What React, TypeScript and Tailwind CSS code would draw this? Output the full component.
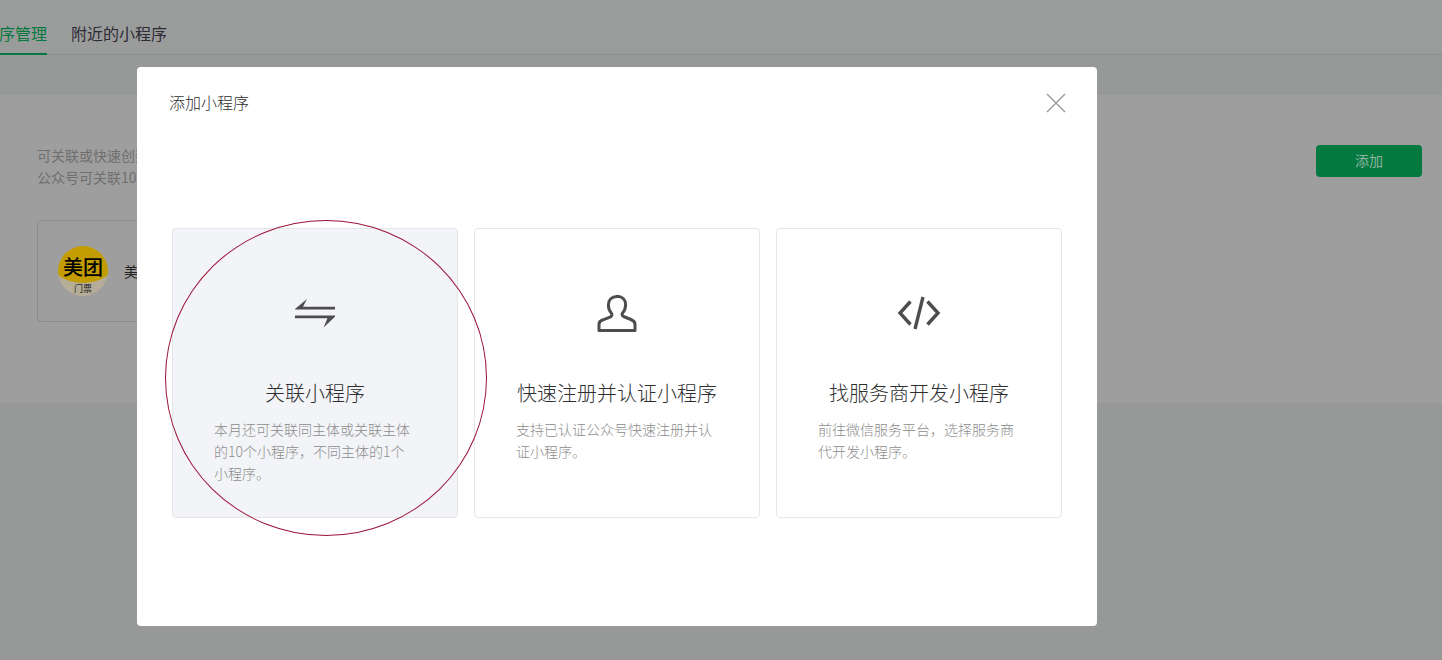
const cards = [
  {
    title: '关联小程序',
    desc: '本月还可关联同主体或关联主体的10个小程序，不同主体的1个小程序。',
    active: true,
    icon: (
      <svg width="44" height="44" viewBox="0 0 44 44" fill="#4d4d4d">
        <path d="M2 18 14 8 10 15.800H42V18.600H2Z" />
        <path d="M2 24.500H42V25.800L30.500 36.500 34.500 27.200H2Z" />
      </svg>
    ),
  },
  {
    title: '快速注册并认证小程序',
    desc: '支持已认证公众号快速注册并认证小程序。',
    active: false,
    icon: (
      <svg width="44" height="44" viewBox="0 0 44 44" fill="none" stroke="#4d4d4d" strokeWidth="3" strokeLinejoin="round">
        <path d="M22 5.500c-5.200 0-8.600 3.600-8.600 8.600 0 3.400 1.200 6.200 3 8.200 1 1.200.6 2.800-.9 3.500l-7.400 3C5.400 29.600 4 31 4 33.200v6.300h36v-6.300c0-2.200-1.400-3.600-4.100-4.700l-7.400-3c-1.500-.7-1.900-2.300-.9-3.500 1.800-2 3-4.800 3-8.200 0-5-3.400-8.600-8.600-8.600Z" />
      </svg>
    ),
  },
  {
    title: '找服务商开发小程序',
    desc: '前往微信服务平台，选择服务商代开发小程序。',
    active: false,
    icon: (
      <svg width="44" height="44" viewBox="0 0 44 44" fill="none" stroke="#4d4d4d" strokeWidth="3.400">
        <path d="M13.500 10.500 3 22l10.500 11.500" />
        <path d="M30.500 10.500 41 22 30.500 33.500" />
        <path d="M26 6 18 38" />
      </svg>
    ),
  },
];

export default function App() {
  return (
    <div className="relative h-[660px] w-full overflow-hidden bg-[#979998] font-['Noto_Sans_CJK_SC',sans-serif]">
      {/* page behind the mask */}
      <div className="flex h-[55px] items-end gap-6 border-b border-[#8c8e8d] bg-[#9a9c9b] text-base">
        <div className="-mb-px -ml-[33px] h-[34px] border-b-2 border-[#047a40] leading-[24px] text-[#047a40]">小程序管理</div>
        <div className="-mb-px h-[34px] leading-[24px] text-[#2e2a35]">附近的小程序</div>
      </div>
      <div className="h-10 bg-[#979998]" />
      <div className="flex h-[308px] flex-col items-start bg-[#9e9e9e] pl-[37px] pr-5 pt-[50px]">
        <div className="flex w-full items-start justify-between">
          <p className="-mt-px w-[600px] text-sm leading-[22px] text-[#6f6f6f]">
            可关联或快速创建小程序，已关联的小程序可被使用。
            <br />
            公众号可关联10个同主体的小程序
          </p>
          <button className="h-8 w-[106px] rounded-sm bg-[#047a40] pb-[2px] text-sm text-[#8fb29f]">添加</button>
        </div>
        <div className="mt-8 flex h-[102px] w-[300px] items-center gap-4 rounded border border-[#8a8a8a] pl-5">
          <div className="flex h-[50px] w-[50px] shrink-0 flex-col items-center overflow-hidden rounded-full bg-[#b5ad97]">
            <div className="flex h-[37px] w-[60px] shrink-0 items-center justify-center rounded-b-[50%] bg-[#c29c00] pt-[5px] text-xl font-medium leading-none text-black">
              美团
            </div>
            <span className="text-[9px] leading-[12px] text-[#222]">门票</span>
          </div>
          <span className="text-sm text-[#222]">美团门票</span>
        </div>
      </div>

      {/* dialog */}
      <div className="absolute left-[137px] top-[67px] h-[559px] w-[960px] rounded bg-white">
        <div className="flex items-center justify-between pl-8 pr-[31px] pt-[23px]">
          <h3 className="text-base font-light leading-6 text-[#2f2f2f]">添加小程序</h3>
          <svg className="mt-[2px]" width="20" height="20" viewBox="0 0 20 20" stroke="#9a9a9a" strokeWidth="1.400">
            <path d="M1 1 19 19M19 1 1 19" />
          </svg>
        </div>
        <div className="ml-[35px] mt-[114px] flex gap-4">
          {cards.map((card) => (
            <div
              key={card.title}
              className={
                card.active
                  ? 'flex h-[290px] w-[286px] flex-col items-center rounded border border-[#e4e6ea] bg-[#f3f4f8] px-[41px] pt-[62px]'
                  : 'flex h-[290px] w-[286px] flex-col items-center rounded border border-[#e7e7e7] bg-white px-[41px] pt-[62px]'
              }
            >
              {card.icon}
              <h4 className="mt-11 whitespace-nowrap text-xl font-light leading-7 text-[#2f2f2f]">{card.title}</h4>
              <p className="mt-[11px] w-full text-sm font-light leading-[22px] text-[#8c8c8c]">{card.desc}</p>
            </div>
          ))}
        </div>
      </div>

      {/* hand drawn circle over the first card */}
      <div className="pointer-events-none absolute left-[165px] top-[220px] h-[316px] w-[322px] rounded-[50%] border border-[#9a1538]" />
    </div>
  );
}
